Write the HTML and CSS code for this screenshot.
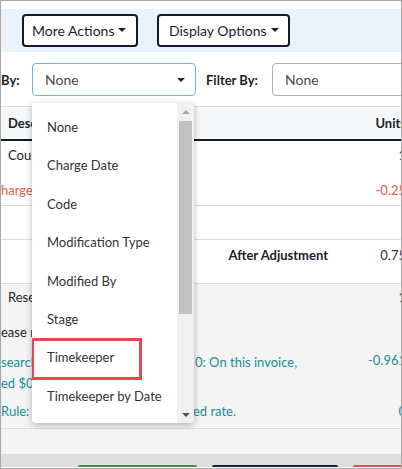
FILE: index.html
```html
<!DOCTYPE html>
<html lang="en">

<head>
	<meta charset="UTF-8">
	<meta name="viewport" content="width=device-width, initial-scale=1.0">
	<title>Invoice Lines</title>
	<link rel="stylesheet" href="styles.css">
</head>

<body>
	<div class="frame">
		<div class="page">
			<!-- toolbar -->
			<div class="toolbar">
				<div class="stub"></div>
				<button class="tool-btn">More Actions<span class="caret"></span></button>
				<button class="tool-btn display">Display Options<span class="caret"></span></button>
			</div>

			<!-- group / filter -->
			<div class="filters">
				<span class="label">By:</span>
				<div class="select focus">None<span class="arrow"></span></div>
				<span class="label filter-label">Filter By:</span>
				<div class="select wide">None</div>
			</div>

			<!-- line items -->
			<div class="table">
				<div class="row head">
					<div class="desc">Description</div>
					<div class="units">Units</div>
				</div>
				<div class="row first">
					<div class="desc">
						<div class="line">Court Filing</div>
						<div class="line note red">harges exceed guidelines</div>
					</div>
					<div class="units">
						<div class="line">1</div>
						<div class="line red">-0.25</div>
					</div>
				</div>
				<div class="row empty"></div>
				<div class="row adjust">
					<div class="desc total">After Adjustment</div>
					<div class="units"><span class="navy">0.75</span></div>
				</div>
				<div class="section">
					<div class="row research">
						<div class="desc">
							<div class="line">Research</div>
							<div class="line note">ease review</div>
							<div class="line note teal split"><span class="lead">search</span><span class="tail">0: On this invoice,</span></div>
							<div class="line note teal">ed $0</div>
							<div class="line note teal split rule"><span class="lead">Rule: T</span><span class="tail">ed rate.</span></div>
						</div>
						<div class="units">
							<div class="line">1</div>
							<div class="line"></div>
							<div class="line teal">-0.961</div>
							<div class="line"></div>
							<div class="line teal">0</div>
						</div>
					</div>
				</div>
				<div class="footer">
					<span class="foot-btn green"></span>
					<span class="foot-btn navy-btn"></span>
					<span class="foot-btn red-btn"></span>
				</div>
			</div>
		</div>

		<!-- open group-by menu -->
		<div class="menu">
			<ul class="options">
				<li>None</li>
				<li>Charge Date</li>
				<li>Code</li>
				<li>Modification Type</li>
				<li>Modified By</li>
				<li>Stage</li>
				<li class="marked">Timekeeper</li>
				<li>Timekeeper by Date</li>
			</ul>
			<div class="scrollbar">
				<span class="sb-arrow up"></span>
				<div class="track"><div class="thumb"></div></div>
				<span class="sb-arrow down"></span>
			</div>
		</div>
	</div>
</body>

</html>
```

FILE: styles.css
```css
/* base */
body {
	margin: 0;
	font-family: 'Lato', 'Liberation Sans', sans-serif;
	color: #1d1d2b;
	background: #fff;
}

.frame {
	position: relative;
	width: 402px;
	height: 469px;
	box-sizing: border-box;
	border: 1px solid #a8a8a8;
	overflow: hidden;
}

.page {
	width: 412px;
}

/* toolbar */
.toolbar {
	margin-top: 8px;
	height: 43px;
	background: #e9f3fc;
	display: flex;
	align-items: center;
}

.stub {
	width: 9px;
	height: 33px;
	background: #eef0f3;
	border-radius: 0 4px 4px 0;
	margin-right: 12px;
}

.tool-btn {
	height: 33px;
	width: 116px;
	box-sizing: border-box;
	border: 2px solid #0d1b2a;
	border-radius: 4px;
	background: #fff;
	color: #1d1d2b;
	font-family: inherit;
	font-size: 14px;
	padding: 0 0 0 8px;
	display: flex;
	align-items: center;
	gap: 4px;
}

.tool-btn.display {
	width: 133px;
	margin-left: 19px;
	padding-left: 10px;
}

.caret {
	width: 0;
	height: 0;
	border-left: 4px solid transparent;
	border-right: 4px solid transparent;
	border-top: 4px solid #1d1d2b;
	margin-top: -2px;
}

/* group / filter */
.filters {
	display: flex;
	align-items: center;
	padding: 11px 0 10px;
}

.label {
	font-weight: 700;
	font-size: 13px;
	width: 31px;
}

.filter-label {
	width: auto;
	margin: 0 14px 0 10px;
}

.select {
	height: 33px;
	width: 164px;
	box-sizing: border-box;
	border: 1px solid #a9b0b8;
	border-radius: 4px;
	display: flex;
	align-items: center;
	padding: 0 10px 0 12px;
	font-size: 14px;
	color: #4a4a4a;
}

.select.focus {
	border-color: #63b6ea;
	justify-content: space-between;
}

.select.wide {
	width: 140px;
}

.arrow {
	width: 0;
	height: 0;
	border-left: 4px solid transparent;
	border-right: 4px solid transparent;
	border-top: 4px solid #2b2b2b;
}

/* table */
.table {
	font-size: 13px;
}

.row {
	display: flex;
	border-bottom: 1px solid #dcdcdc;
}

.row .desc {
	flex: 1;
	padding-left: 7px;
}

.row .units {
	width: 78px;
	padding-right: 7px;
	text-align: right;
}

.line {
	height: 20px;
	line-height: 20px;
	white-space: nowrap;
}

.head {
	background: #f6f7f9;
	border-top: 1px solid #dcdcdc;
	border-bottom: 2px solid #0d1b2a;
	height: 32px;
	align-items: center;
	font-weight: 700;
}

.first {
	height: 60px;
	padding: 4px 0 0;
	box-sizing: content-box;
}

.first .line + .line {
	margin-top: 15px;
}

.first .desc .red {
	margin-left: -7px;
}

.red {
	color: #ec5a4a;
}

.empty {
	height: 33px;
}

.adjust {
	height: 44px;
	padding-top: 5px;
	box-sizing: border-box;
	align-items: flex-start;
	line-height: 20px;
}

.desc.total {
	font-weight: 700;
	text-align: right;
	padding-right: 0;
}

.navy {
	color: #2c2c68;
}

/* research block */
.section {
	background: #f4f4f4;
	height: 144px;
	border-bottom: 1px solid #dcdcdc;
}

.research {
	border-bottom: none;
	padding-top: 3px;
}

.research .desc .line + .line {
	margin-left: -7px;
}

.research .line:nth-child(2) { margin-top: 15px; }
.research .line:nth-child(3) { margin-top: 10px; }
.research .line:nth-child(4) { margin-top: 1px; }
.research .line:nth-child(5) { margin-top: 8px; }

.research .units .line:nth-child(3) { margin-top: 8px; }
.research .units .line:nth-child(4) { margin-top: 3px; }

.teal {
	color: #1a8b9a;
}

.split {
	display: flex;
}

.split .lead {
	width: 194px;
}

.split.rule .lead {
	width: 192px;
}

.footer {
	display: flex;
	align-items: flex-end;
	height: 38px;
	background: linear-gradient(#f4f4f4 0 25px, #dedede 25px);
}

.foot-btn {
	height: 2px;
	border-radius: 3px 3px 0 0;
}

.foot-btn.green {
	width: 120px;
	margin-left: 77px;
	background: #3b8f4a;
}

.foot-btn.navy-btn {
	width: 127px;
	margin-left: 15px;
	background: #13223a;
}

.foot-btn.red-btn {
	width: 60px;
	margin-left: 15px;
	background: #d9534f;
}

/* group-by menu */
.menu {
	position: absolute;
	left: 31px;
	top: 102px;
	width: 162px;
	height: 320px;
	background: #fff;
	border-radius: 0 0 4px 4px;
	box-shadow: 0 2px 6px rgba(0, 0, 0, 0.28);
	display: flex;
	overflow: hidden;
}

.options {
	list-style: none;
	margin: 0;
	padding: 5px 0 0;
	flex: 1;
	font-size: 13px;
	color: #333;
}

.options li {
	height: 38.4px;
	line-height: 38.4px;
	padding-left: 15px;
	white-space: nowrap;
}

.options li.marked {
	position: relative;
}

.options li.marked::after {
	content: "";
	position: absolute;
	left: -1px;
	top: 0;
	width: 111px;
	height: 42px;
	box-sizing: border-box;
	border: 3px solid #e8474e;
}

.scrollbar {
	width: 17px;
	background: #f1f1f1;
	display: flex;
	flex-direction: column;
	align-items: center;
}

.sb-arrow {
	height: 17px;
	display: flex;
	align-items: center;
}

.sb-arrow::before {
	content: "";
	border-left: 4px solid transparent;
	border-right: 4px solid transparent;
}

.sb-arrow.up::before {
	border-bottom: 4px solid #a3a3a3;
}

.sb-arrow.down::before {
	border-top: 4px solid #505050;
}

.track {
	flex: 1;
	width: 100%;
}

.thumb {
	width: 13px;
	height: 193px;
	margin: 1px auto 0;
	background: #c1c1c1;
}
```
